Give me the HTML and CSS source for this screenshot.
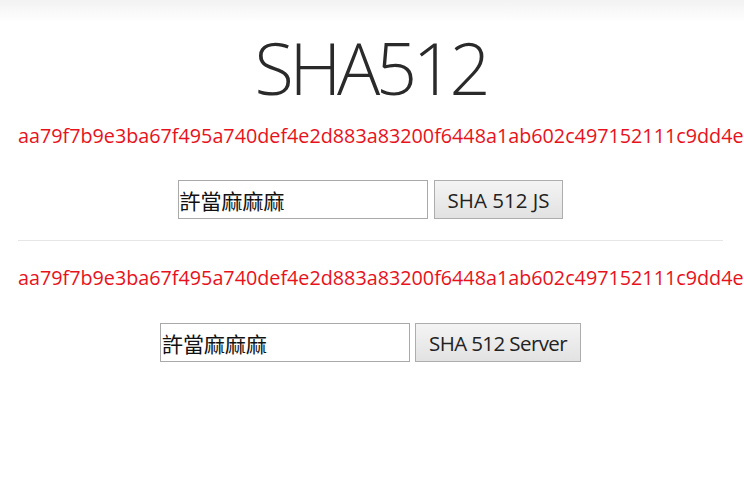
FILE: index.html
```html
<!DOCTYPE html>
<html lang="zh-Hant">
<head>
<meta charset="utf-8">
<title>SHA512</title>
<link rel="stylesheet" href="styles.css">
</head>
<body>
<header class="topbar"></header>
<main class="container">
  <h1 class="title">SHA512</h1>
  <p class="hash">aa79f7b9e3ba67f495a740def4e2d883a83200f6448a1ab602c497152111c9dd4e</p>
  <div class="form-row">
    <input class="text-input" type="text" value="許當麻麻麻">
    <button class="btn" type="button">SHA 512 JS</button>
  </div>
  <hr class="divider">
  <p class="hash hash-server">aa79f7b9e3ba67f495a740def4e2d883a83200f6448a1ab602c497152111c9dd4e</p>
  <div class="form-row form-row-server">
    <input class="text-input" type="text" value="許當麻麻麻">
    <button class="btn btn-server" type="button">SHA 512 Server</button>
  </div>
</main>
</body>
</html>
```
FILE: styles.css
```css
html, body {
  margin: 0;
  padding: 0;
  background: #fff;
  overflow: hidden;
}
body {
  font-family: "Open Sans", "Noto Sans", "Noto Sans CJK TC", sans-serif;
  color: #333;
}
.topbar {
  height: 22px;
  background: linear-gradient(#f2f2f2, #fff);
}
.container {
  padding: 0 21px 0 18px;
  text-align: center;
}
.title {
  margin: 9px 0 0;
  font-size: 72px;
  line-height: 72px;
  font-weight: 300;
  letter-spacing: -4.3px;
  color: #2a2a2a;
}
.hash {
  margin: 21px 0 0;
  font-size: 19.75px;
  line-height: 23px;
  color: #e8121c;
  white-space: nowrap;
  text-align: left;
}
.hash-server {
  margin-top: 25px;
}
.form-row {
  margin-top: 33px;
  display: flex;
  justify-content: center;
  gap: 6px;
}
.form-row-server {
  margin-top: 34px;
  gap: 5px;
}
.text-input {
  box-sizing: border-box;
  width: 250px;
  height: 39px;
  margin: 0;
  padding: 0 1px;
  border: 1px solid #a9a9a9;
  border-radius: 0;
  font-family: "Noto Sans CJK TC", sans-serif;
  font-size: 21px;
  color: #111;
  background: #fff;
}
.btn {
  box-sizing: border-box;
  height: 39px;
  margin: 0;
  padding: 0 13px;
  border: 1px solid #adadad;
  border-radius: 0;
  background: linear-gradient(#f4f4f4, #e2e2e2);
  font-family: "Open Sans", sans-serif;
  font-size: 20.5px;
  color: #222;
}
.btn-server {
  letter-spacing: -0.6px;
}
.divider {
  margin: 21px 0 0;
  border: 0;
  border-top: 1px solid #e6e6e6;
  height: 0;
}
```
